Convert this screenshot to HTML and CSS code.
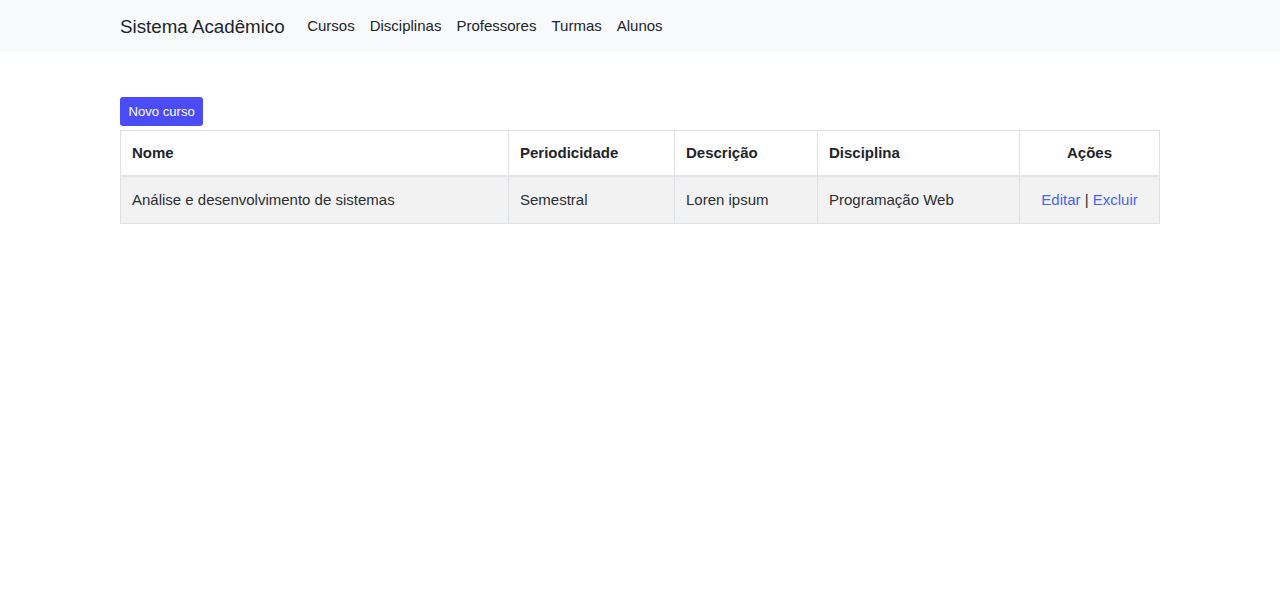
FILE: index.html
```html
<!DOCTYPE html>
<html lang="pt-BR">
<head>
<meta charset="utf-8">
<title>Sistema Acadêmico</title>
<link rel="stylesheet" href="styles.css">
</head>
<body>
<nav class="navbar">
  <div class="container navbar-inner">
    <a class="brand" href="#">Sistema Acadêmico</a>
    <ul class="nav">
      <li><a href="#">Cursos</a></li>
      <li><a href="#">Disciplinas</a></li>
      <li><a href="#">Professores</a></li>
      <li><a href="#">Turmas</a></li>
      <li><a href="#">Alunos</a></li>
    </ul>
  </div>
</nav>
<main class="container main">
  <a class="btn" href="#">Novo curso</a>
  <table class="table">
    <thead>
      <tr>
        <th class="c-nome">Nome</th>
        <th class="c-per">Periodicidade</th>
        <th class="c-desc">Descrição</th>
        <th class="c-disc">Disciplina</th>
        <th class="c-acoes center">Ações</th>
      </tr>
    </thead>
    <tbody>
      <tr>
        <td>Análise e desenvolvimento de sistemas</td>
        <td>Semestral</td>
        <td>Loren ipsum</td>
        <td>Programação Web</td>
        <td class="center"><a class="link" href="#">Editar</a> | <a class="link" href="#">Excluir</a></td>
      </tr>
    </tbody>
  </table>
</main>
</body>
</html>
```

FILE: styles.css
```css
* { box-sizing: border-box; }
html, body { margin: 0; padding: 0; }
body {
  font-family: "Liberation Sans", Arial, sans-serif;
  font-size: 15px;
  line-height: 22px;
  color: #212529;
  background: #fff;
}
a { text-decoration: none; }
.container {
  width: 1040px;
  margin: 0 auto;
}
.navbar {
  background: #f8f9fa;
  height: 52px;
}
.navbar-inner {
  display: flex;
  align-items: center;
  height: 52px;
}
.brand {
  font-size: 18.75px;
  line-height: 28px;
  color: #212529;
  margin-right: 15px;
  position: relative;
  top: 1px;
}
.nav {
  list-style: none;
  margin: 0;
  padding: 0;
  display: flex;
}
.nav a {
  display: block;
  padding: 0 7.5px;
  color: #212529;
  line-height: 22px;
}
.main {
  padding-top: 45px;
}
.btn {
  display: inline-block;
  background: #4a4cf8;
  color: #fff;
  font-size: 13.125px;
  line-height: 21px;
  padding: 4px 8.5px;
  border-radius: 3px;
  height: 29px;
}
.table {
  margin-top: 4px;
  width: 1039px;
  border-collapse: collapse;
  table-layout: fixed;
}
.table th, .table td {
  border: 1px solid #dee2e6;
  padding: 11px 11px;
  text-align: left;
  line-height: 22px;
}
.table th { font-weight: bold; background: #fff; }
.table thead th { border-bottom: 2px solid #e3e5e8; }
.table tbody td { background: #f2f2f2; color: #2b2f33; line-height: 23px; padding-bottom: 12px; }
.center { text-align: center !important; }
.c-nome { width: 388px; }
.c-per { width: 166px; }
.c-desc { width: 143px; }
.c-disc { width: 202px; }
.c-acoes { width: 140px; }
.link { color: #4766ee; }
```
